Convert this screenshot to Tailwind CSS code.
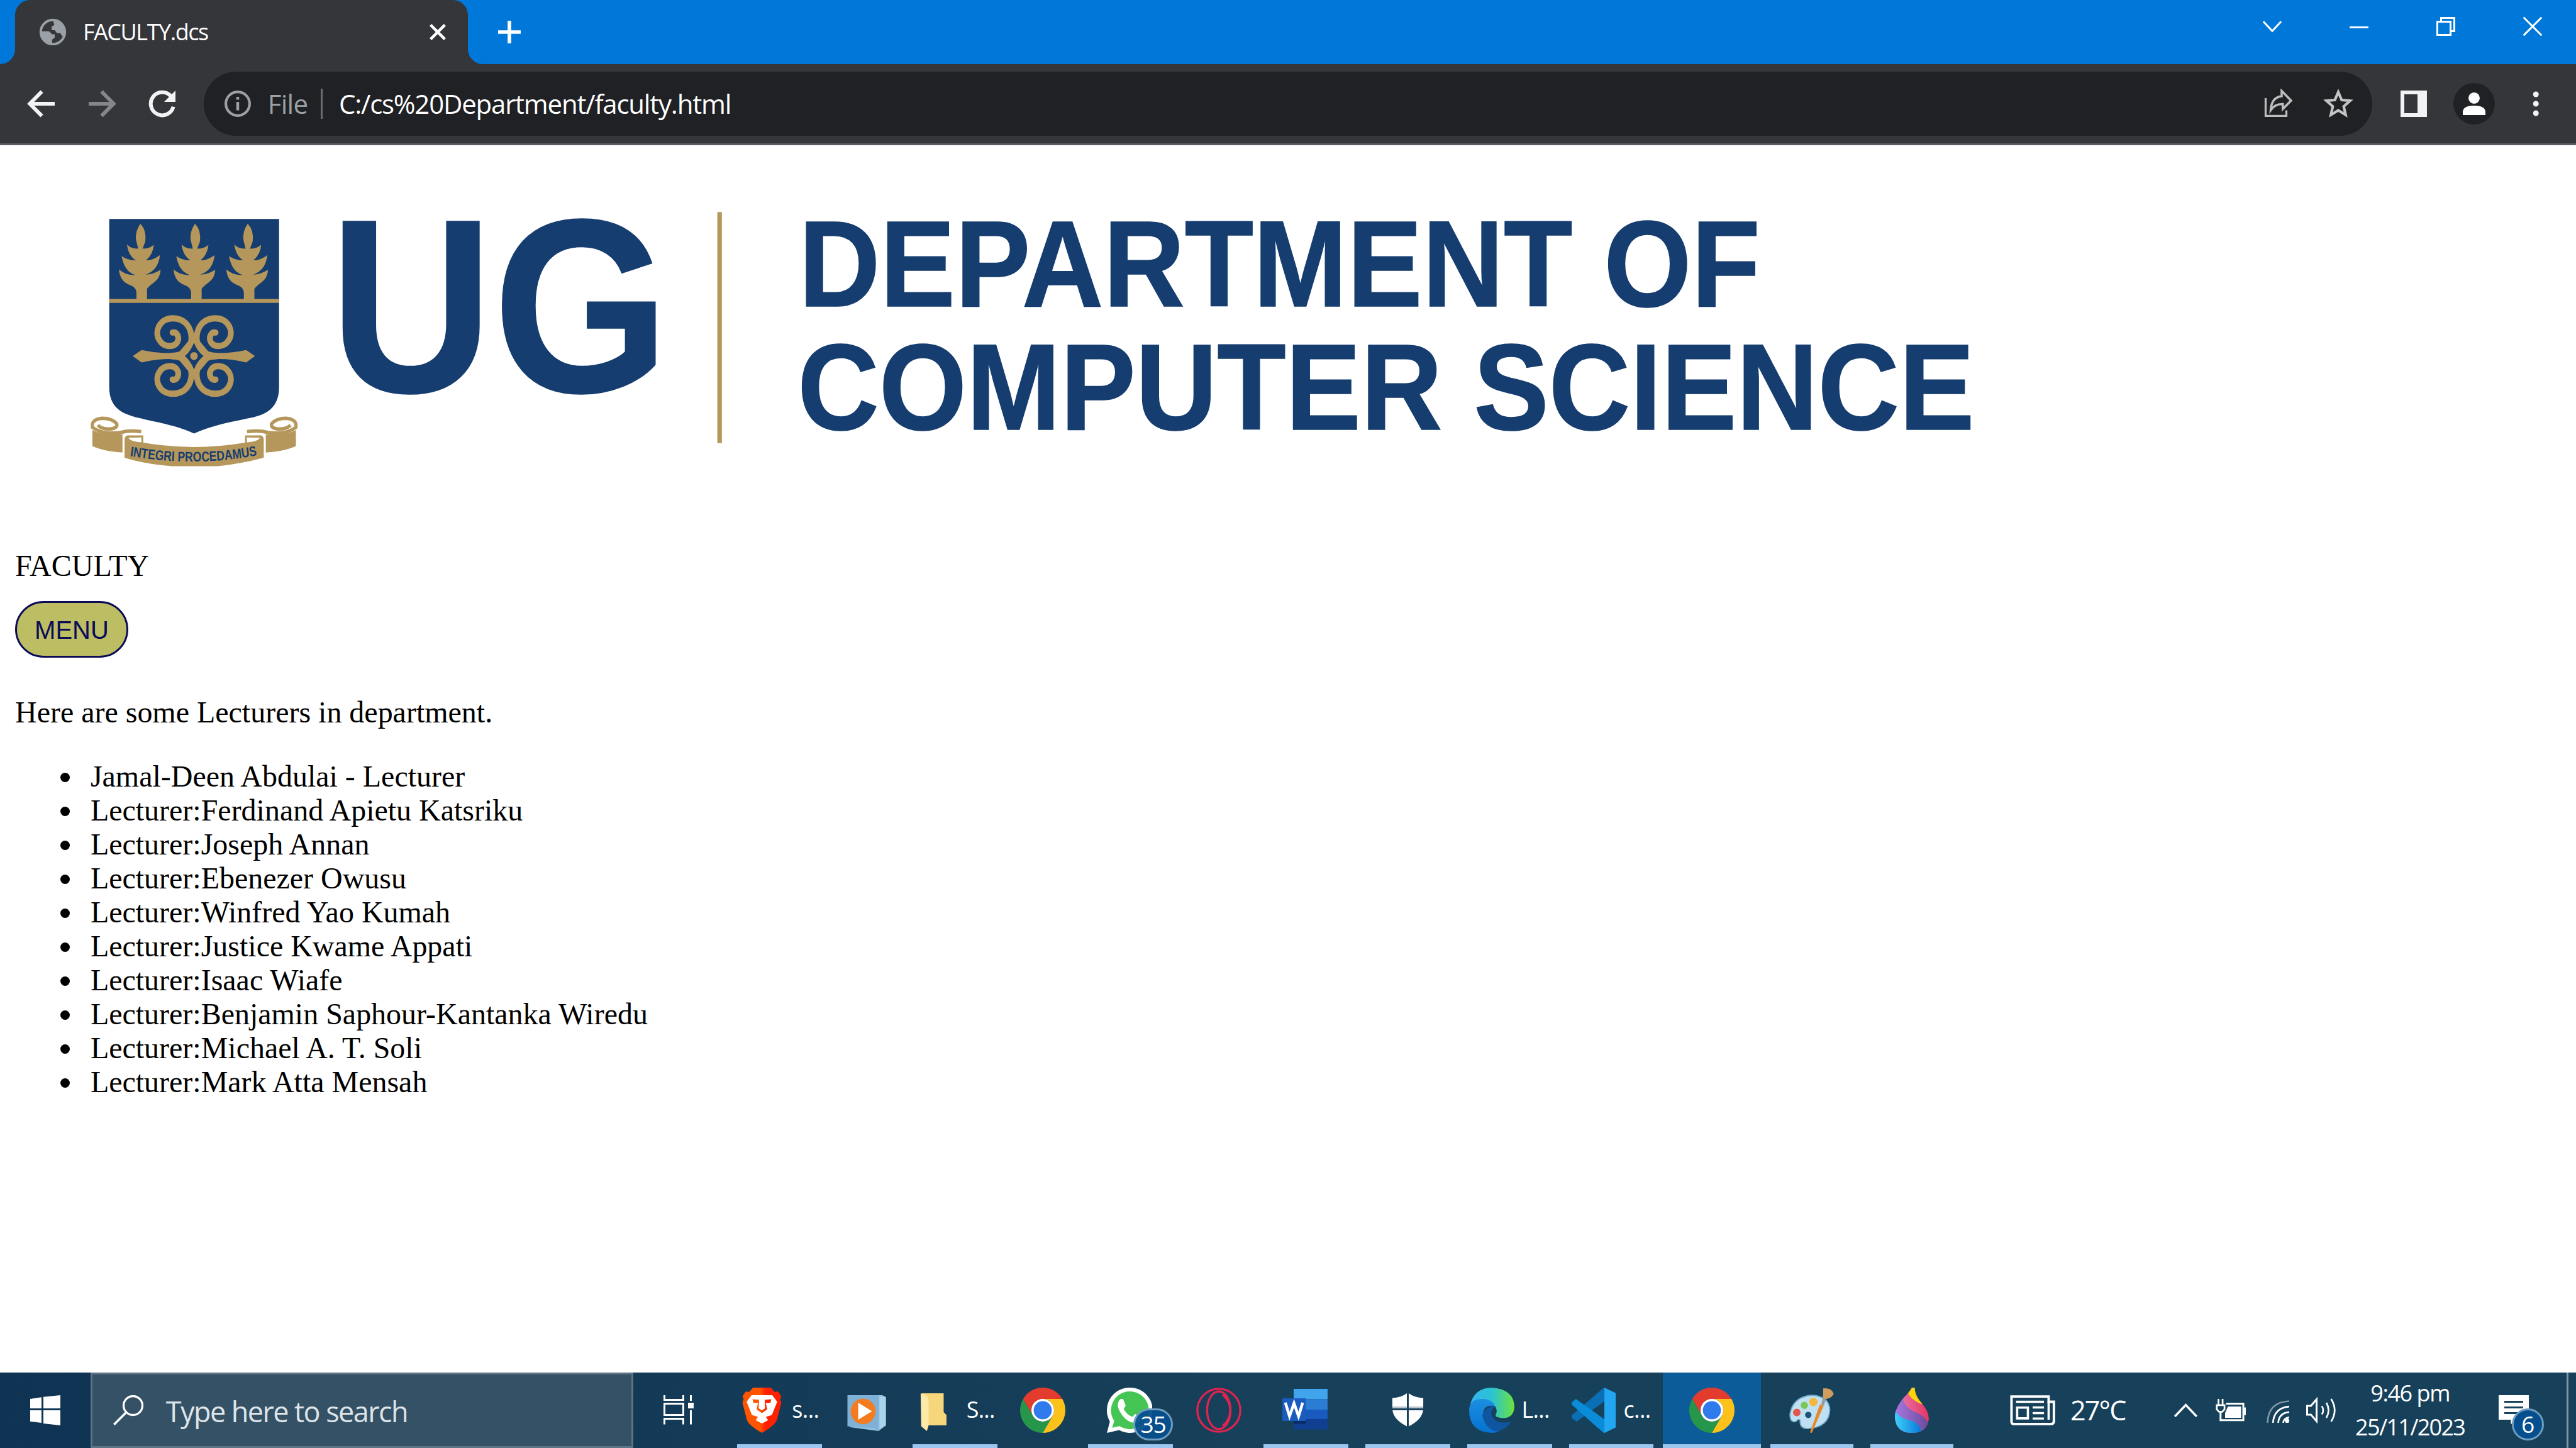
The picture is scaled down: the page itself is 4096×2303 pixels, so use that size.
<!DOCTYPE html>
<html lang="en" class="text-[11.994px]">
<head>
<meta charset="utf-8">
<title>FACULTY.dcs</title>
<script src="https://cdn.jsdelivr.net/npm/@tailwindcss/browser@4"></script>
</head>
<body class="h-[2303px] w-[4096px] overflow-hidden bg-white">
<svg width="0" height="0" class="absolute">
  <defs>
    <symbol id="chrome" viewBox="0 0 24 24">
      <path fill="#e33b2e" d="M1.6 6A12 12 0 0 1 22.4 6H12A6 6 0 0 0 6.8 15Z"/>
      <path fill="#fcc21b" d="M22.4 6A12 12 0 0 1 12 24L17.2 15A6 6 0 0 0 12 6Z"/>
      <path fill="#25964a" d="M12 24A12 12 0 0 1 1.6 6L6.8 15A6 6 0 0 0 17.2 15Z"/>
      <circle cx="12" cy="12" r="6" fill="#fff"/><circle cx="12" cy="12" r="4.8" fill="#2f7bee"/>
    </symbol>
    <g id="tree"><path d="M375 163Q344 205 349 250L362 300Q320 302 296 277Q305 340 348 364Q300 364 265 340Q280 425 345 444Q290 448 249 414Q255 480 310 498Q350 510 352 540V585H414V520Q425 505 455 485Q492 460 494 415Q450 442 405 442Q480 420 490 335Q450 364 408 364Q450 330 454 278Q430 300 388 300L404 260Q412 200 375 163Z"/></g>
    <path id="horn" d="M564 760C592 752 606 790 592 812C575 842 515 842 490 806C452 760 485 682 565 682C640 682 675 735 675 790C675 845 635 888 560 888" fill="none" stroke-width="34" stroke-linecap="round"/>
    <g id="scroll">
      <path d="M93 1295Q150 1325 270 1318V1418Q150 1410 93 1383Z"/>
      <path d="M125 1268Q150 1292 200 1289Q245 1283 236 1260Q210 1230 150 1230Q85 1236 93 1280Q150 1322 260 1308Q310 1294 380 1304" fill="none" stroke="#b5975b" stroke-width="19"/>
    </g>
    <path id="motto" d="M313 1437Q690 1501 1072 1432"/>
  </defs>
</svg>
<div class="flex h-full w-full flex-col font-['Open_Sans',sans-serif]">

  <!-- Tab strip -->
  <header class="flex h-34 shrink-0 bg-[#0078d9] text-white">
    <div class="relative ml-8 flex h-34 w-240 items-center rounded-t-[2rem] bg-[#35363a]">
      <svg class="absolute bottom-0 -left-8 size-8" viewBox="0 0 8 8"><path d="M8 0V8H0A8 8 0 0 0 8 0Z" fill="#35363a"/></svg>
      <svg class="absolute -right-8 bottom-0 size-8" viewBox="0 0 8 8"><path d="M0 0V8H8A8 8 0 0 1 0 0Z" fill="#35363a"/></svg>
      <svg class="ml-12 size-16" viewBox="0 0 16 16"><circle cx="8" cy="8" r="6.4" fill="none" stroke="#9aa0a6" stroke-width="1.3"/><path fill="#9aa0a6" d="M8.2 2H9.5A6.3 6.3 0 0 1 14.3 9L13 10.3 12 8.6H10.2L9 7H7.4V5.2L8.8 4.2ZM1.7 7.6H6L7.6 9.2H9V11L7.6 12V14.3A6.3 6.3 0 0 1 1.7 7.6Z"/></svg>
      <span class="ml-8 w-183 text-[3rem] leading-16 tracking-[-0.12rem] whitespace-nowrap">FACULTY.dcs</span>
      <svg class="size-10" viewBox="0 0 10 10"><path d="M1.2 1.2 8.8 8.8M8.8 1.2 1.2 8.8" stroke="#fff" stroke-width="1.5"/></svg>
    </div>
    <svg class="mt-11 ml-16 size-12" viewBox="0 0 12 12"><path d="M6 0V12M0 6H12" stroke="#fff" stroke-width="1.9"/></svg>
    <div class="mt-9 mr-18 ml-auto flex items-start">
      <svg class="mr-36 size-10" viewBox="0 0 10 10"><path d="M.3 2.4 5 7.4 9.7 2.4" fill="none" stroke="#fff"/></svg>
      <svg class="mr-36 size-10" viewBox="0 0 10 10"><path d="M0 5.5H10" stroke="#fff"/></svg>
      <svg class="mr-36 size-10" viewBox="0 0 10 10"><path d="M.5 2.5H7.5V9.5H.5ZM2.5 2.5V.5H9.5V7.5H7.5" fill="none" stroke="#fff"/></svg>
      <svg class="size-10" viewBox="0 0 10 10"><path d="M.2.2 9.8 9.8M9.8.2.2 9.8" stroke="#fff"/></svg>
    </div>
  </header>

  <!-- Toolbar -->
  <div class="flex h-43 shrink-0 items-start border-b-[3px] border-[#5f5e66] bg-[#35363a]">
    <svg class="mt-13 ml-14 size-16" viewBox="0 0 16 16"><path d="M15 8H2M8.2 1.5 1.8 8 8.2 14.5" fill="none" stroke="#f1f3f4" stroke-width="2"/></svg>
    <svg class="mt-13 ml-16 size-16" viewBox="0 0 16 16"><path d="M1 8H14M7.8 1.5 14.2 8 7.8 14.5" fill="none" stroke="#85868a" stroke-width="2"/></svg>
    <svg class="mt-13 ml-16 size-16" viewBox="0 0 16 16"><path d="M13.9 9.6A6.1 6.1 0 1 1 12.6 4" fill="none" stroke="#f1f3f4" stroke-width="2"/><path d="M15 1V7H9Z" fill="#f1f3f4"/></svg>
    <div class="mt-4 mr-15 ml-14 flex h-34 flex-1 items-center rounded-full bg-[#202124]">
      <svg class="ml-10 size-16" viewBox="0 0 16 16"><circle cx="8" cy="8" r="6.3" fill="none" stroke="#9aa0a6" stroke-width="1.4"/><path d="M8 7V11.5M8 4.3V5.8" stroke="#9aa0a6" stroke-width="1.5"/></svg>
      <span class="ml-8 w-28 text-[3.5rem] leading-18 tracking-[-0.06rem] whitespace-nowrap text-[#9aa0a6]">File</span>
      <span class="h-16 w-1 bg-[#6b6d71]"></span>
      <span class="ml-8.75 text-[3.5rem] leading-18 tracking-[-0.1rem] whitespace-nowrap text-white">C:/cs%20Department/faculty.html</span>
      <svg class="mr-16 ml-auto size-16" viewBox="0 0 16 16"><path d="M1.5 5V14.5H12.5V11.5" fill="none" stroke="#bdbdbd" stroke-width="1.1"/><path d="M10 1.2 15 6.3 10.6 10.8V8.2Q6.5 8 4.2 11.4 4.6 4.6 10 4Z" fill="none" stroke="#bdbdbd" stroke-width="1.2"/></svg>
      <svg class="mr-10 size-16" viewBox="0 0 16 16"><path d="M8 1.8 9.8 6 14.3 6.4 10.9 9.4 11.9 13.9 8 11.5 4.1 13.9 5.1 9.4 1.7 6.4 6.2 6Z" fill="none" stroke="#c4c4c4" stroke-width="1.4"/></svg>
    </div>
    <svg class="mt-14 size-14" viewBox="0 0 14 14"><path fill="#f1f3f4" fill-rule="evenodd" d="M0 0H14V14H0ZM2 2V12H9V2Z"/></svg>
    <svg class="mt-10 ml-14 size-22" viewBox="0 0 22 22"><circle cx="11" cy="11" r="11" fill="#202124"/><circle cx="11" cy="8" r="3" fill="#fff"/><path d="M5 17V15Q5.5 12 11 12T17 15V17Z" fill="#fff"/></svg>
    <svg class="mt-14 mr-19.5 ml-20 h-14 w-3.5" viewBox="0 0 3.5 14"><g fill="#f1f3f4"><circle cx="1.75" cy="2" r="1.5"/><circle cx="1.75" cy="7" r="1.5"/><circle cx="1.75" cy="12" r="1.5"/></g></svg>
  </div>

  <!-- Page -->
  <main class="flex flex-1 flex-col items-start overflow-hidden bg-white font-['Liberation_Serif',serif] text-[4rem] leading-18 text-black">
    <svg class="block h-[53.5rem] w-full shrink-0" viewBox="0 77 1366 214" preserveAspectRatio="none">
      <g transform="translate(40.6 102.87) scale(.09024 .09668)" fill="#b5975b">
        <path fill="#163d6f" d="M192 137H1190V1060C1190 1195 1085 1220 980 1236C860 1258 770 1280 690 1314C610 1278 520 1260 400 1236C300 1215 192 1195 192 1060Z"/>
        <use href="#tree"/><use href="#tree" x="321"/><use href="#tree" x="631"/>
        <path d="M192 576H1190V597H192Z"/>
        <g stroke="#b5975b">
          <use href="#horn"/>
          <use href="#horn" transform="translate(1381 0) scale(-1 1)"/>
          <use href="#horn" transform="translate(0 1778) scale(1 -1)"/>
          <use href="#horn" transform="translate(1381 1778) scale(-1 -1)"/>
        </g>
        <path d="M330 889 382 856Q480 875 560 872L600 870 690 770 780 870 820 872Q900 875 997 856L1048 889 997 924Q900 903 820 906L780 908 690 1010 600 908 560 906Q480 903 382 924Z"/>
        <path fill="#163d6f" d="M637 889Q670 865 690 816Q710 865 746 889Q710 915 690 962Q670 915 637 889Z"/>
        <circle cx="690" cy="889" r="22"/>
        <use href="#scroll"/><use href="#scroll" transform="translate(1382 0) scale(-1 1)"/>
        <path fill-rule="evenodd" d="M282 1345Q285 1322 310 1324H392V1364Q690 1412 990 1364V1324H1072Q1097 1322 1100 1345V1447Q960 1482 830 1493H560Q400 1482 282 1447ZM303 1337Q320 1360 381 1362V1336ZM1079 1337Q1062 1360 1001 1362V1336Z"/>
        <text fill="#163d6f" font-family="Liberation Sans" font-weight="700" font-size="76" textLength="752" lengthAdjust="spacingAndGlyphs"><textPath href="#motto" textLength="752" lengthAdjust="spacingAndGlyphs">INTEGRI PROCEDAMUS</textPath></text>
      </g>
      <path d="M380.4 112.4H382.8V235H380.4Z" fill="#b5975b"/>
      <g fill="#163d6f" stroke="#163d6f" stroke-width=".5" font-family="Liberation Sans" font-weight="700">
        <text x="174.7" y="207.8" font-size="131.5" textLength="180.2" lengthAdjust="spacingAndGlyphs">UG</text>
        <text x="423.6" y="162.4" font-size="65.1" textLength="509.8" lengthAdjust="spacingAndGlyphs">DEPARTMENT OF</text>
        <text x="423" y="227.8" font-size="65.1" textLength="624" lengthAdjust="spacingAndGlyphs">COMPUTER SCIENCE</text>
      </g>
    </svg>
    <p class="ml-8 whitespace-nowrap">FACULTY</p>
    <button class="mt-10 ml-8 flex h-30 w-60 items-center justify-center rounded-full border-[3px] border-[#0b0b58] bg-[#bdbd63] pt-1 font-['Liberation_Sans',sans-serif] text-[3.333rem] leading-16 text-[#0b0b58]">MENU</button>
    <p class="mt-20 ml-8 whitespace-nowrap">Here are some Lecturers in department.</p>
    <ul class="mt-16 ml-48 whitespace-nowrap">
      <li class="flex items-center"><span class="mt-1 mr-11 -ml-16 size-5 rounded-full bg-black"></span>Jamal-Deen Abdulai - Lecturer</li>
      <li class="flex items-center"><span class="mt-1 mr-11 -ml-16 size-5 rounded-full bg-black"></span>Lecturer:Ferdinand Apietu Katsriku</li>
      <li class="flex items-center"><span class="mt-1 mr-11 -ml-16 size-5 rounded-full bg-black"></span>Lecturer:Joseph Annan</li>
      <li class="flex items-center"><span class="mt-1 mr-11 -ml-16 size-5 rounded-full bg-black"></span>Lecturer:Ebenezer Owusu</li>
      <li class="flex items-center"><span class="mt-1 mr-11 -ml-16 size-5 rounded-full bg-black"></span>Lecturer:Winfred Yao Kumah</li>
      <li class="flex items-center"><span class="mt-1 mr-11 -ml-16 size-5 rounded-full bg-black"></span>Lecturer:Justice Kwame Appati</li>
      <li class="flex items-center"><span class="mt-1 mr-11 -ml-16 size-5 rounded-full bg-black"></span>Lecturer:Isaac Wiafe</li>
      <li class="flex items-center"><span class="mt-1 mr-11 -ml-16 size-5 rounded-full bg-black"></span>Lecturer:Benjamin Saphour-Kantanka Wiredu</li>
      <li class="flex items-center"><span class="mt-1 mr-11 -ml-16 size-5 rounded-full bg-black"></span>Lecturer:Michael A. T. Soli</li>
      <li class="flex items-center"><span class="mt-1 mr-11 -ml-16 size-5 rounded-full bg-black"></span>Lecturer:Mark Atta Mensah</li>
    </ul>
  </main>

  <!-- Taskbar -->
  <footer class="flex h-40 shrink-0 bg-linear-to-r from-[#0f3353] via-[#17405a] to-[#17415a] text-[3rem] leading-16 whitespace-nowrap text-white">
    <div class="flex w-48 items-center justify-center"><svg class="size-16" viewBox="0 0 16 16"><path fill="#fff" d="M0 2 6 1.1V7H0ZM7 .9 16 0V7H7ZM0 8H6V14.7L0 13.9ZM7 8H16V16L7 15Z"/></svg></div>
    <div class="flex w-288 items-center border-[3px] border-[#5d7386] bg-[#345166]">
      <svg class="ml-11 size-16" viewBox="0 0 16 16"><circle cx="10.5" cy="5.5" r="5" fill="none" stroke="#fff" stroke-width="1.1"/><path d="M7 9 .4 15.6" stroke="#fff" stroke-width="1.2"/></svg>
      <span class="mt-1 ml-12 text-[3.75rem] leading-20 tracking-[-0.13rem] text-[#dfe4e8]">Type here to search</span>
    </div>
    <div class="flex w-48 items-center justify-center"><svg class="size-16" viewBox="0 0 16 16"><g fill="none" stroke="#fff"><path d="M.5 0V2.5H10.5V0M.5 4.5H10.5V10.5H.5ZM.5 15.5V12.5H10.5V15.5M14.5 0V3M14.5 8V15.5"/></g><path d="M13 4H16V7H13Z" fill="#fff"/></svg></div>

    <div class="ml-7 flex w-45 items-center border-b-[6px] border-[#9ac6f0] pl-2.5">
      <svg class="mt-2 h-24 w-21" viewBox="0 0 21 24"><defs><linearGradient id="br"><stop offset=".45" stop-color="#ff5500"/><stop offset=".6" stop-color="#ff2000"/></linearGradient></defs><path fill="url(#br)" d="M5.8 0H15.2L17.3 2.3 19 2 20.8 4.6 20.2 6 20.8 8 18.5 17Q17.5 20 10.5 24 3.5 20 2.5 17L.2 8 .8 6 .2 4.6 2 2 3.7 2.3Z"/><path fill="#fff" fill-rule="evenodd" d="M5 4H16L18.6 7.5 15.8 14.5 12.6 15.5 13.8 17.3 10.5 19 7.2 17.3 8.4 15.5 5.2 14.5 2.4 7.5ZM5.5 6.2 9 6.4 8.8 11 10.5 12 12.2 11 12 6.4 15.5 6.2 15 8 12.6 8.2 13.3 11.5 10.5 13.5 7.7 11.5 8.4 8.2 6 8Z"/></svg>
      <span class="mt-1 ml-5.5 tracking-[-0.05rem]">s...</span>
    </div>
    <div class="ml-1 flex w-45 items-center justify-center">
      <svg class="mt-2 h-20 w-21" viewBox="0 0 21 20"><path fill="#8fbfe0" d="M2 1H19L21 2V17L17 20 2 18Z"/><path fill="#7fb0d6" d="M.5 1H17V20L15 18.5.5 17.5Z"/><path fill="#a9d4ea" d="M17.5 1.5 20.5 2V17L17.5 19Z"/><ellipse cx="8.8" cy="9.6" rx="6.6" ry="6.8" fill="#f47b20"/><path fill="#fff" d="M6.2 5 13.5 9.5 6.2 14Z"/></svg>
    </div>
    <div class="ml-2 flex w-45 items-center border-b-[6px] border-[#9ac6f0] pl-4">
      <svg class="mt-4 h-20 w-14" viewBox="0 0 14 20"><path fill="#f5d67a" d="M1 0H12.5V10L14 11.5V17H3Z"/><path fill="#ffe9a6" d="M.3 0 3 .8Q4.5 2 4.5 4V17L3.6 20 .6 17.5Z"/></svg>
      <span class="mt-1 ml-10.5 tracking-[-0.06rem]">S...</span>
    </div>
    <div class="ml-1.5 flex w-45 items-center justify-center"><svg class="size-24"><use href="#chrome"/></svg></div>
    <div class="relative ml-1.5 flex w-45 items-center border-b-[6px] border-[#9ac6f0] pl-10">
      <svg class="mt-2 size-24" viewBox="0 0 24 24"><path fill="#fff" d="M12 0A12 12 0 1 1 6.5 22.5L0 24 1.6 18A12 12 0 0 1 12 0Z"/><path fill="#45c654" d="M12 2A10 10 0 1 1 6.8 20.4L2.8 21.3 3.9 17.6A10 10 0 0 1 12 2Z"/><path fill="#fff" d="M7.2 6H8.6L10 9.5 8.9 11.3Q10.5 14.3 13.5 15.5L15 14 18.3 15.7Q18.3 18.7 15 18.8 11 18.5 8 14.5 4 9 7.2 6Z"/></svg>
      <span class="absolute top-19 left-24 flex h-17 w-21 items-center justify-center rounded-full border-[3px] border-[#6f9dc0] bg-[#064f8e]/95 text-[3.1rem] leading-17 tracking-[-0.1rem]">35</span>
    </div>
    <div class="ml-2 flex w-45 items-center justify-center"><svg class="size-24" viewBox="0 0 24 24"><g fill="none" stroke="#e0234f"><circle cx="12" cy="12" r="11.4" stroke-width="1.1"/><ellipse cx="12" cy="12" rx="6.2" ry="10" stroke-width="1.1"/><path d="M14 3.8Q18 7 18 12T14 20.2" stroke-width="1"/></g></svg></div>
    <div class="ml-1 flex w-45 items-center border-b-[6px] border-[#9ac6f0] pl-10">
      <svg class="mt-1 h-22 w-24" viewBox="0 0 24 22"><path fill="#41a5ee" d="M6 0H24V5.5H6Z"/><path fill="#2b7cd3" d="M6 5.5H24V11H6Z"/><path fill="#185abd" d="M6 11H24V16H6Z"/><path fill="#103f91" d="M6 16H24V21.5H6Z"/><path fill="#0a2c66" d="M6 17H12.5V18.5H6Z"/><path fill="#1a5bbe" d="M0 5H12.5V17H0Z"/><path d="M1.6 7.3 3.8 14.5 6.2 7.6 8.6 14.5 10.8 7.3" fill="none" stroke="#fff" stroke-width="1.5"/></svg>
    </div>
    <div class="ml-9 flex w-45 items-center justify-center border-b-[6px] border-[#9ac6f0]">
      <svg class="mt-1.5 h-17.5 w-17" viewBox="0 0 17 17.5"><path fill="#fff" d="M8 0V7H.3V2.5Q5 2.3 8 0ZM9 0Q12 2.3 16.7 2.5V7H9ZM.4 9H8V17.5Q1 14 .4 9ZM9 9H16.6Q16 14 9 17.5Z"/><path fill="#b4c3cc" d="M.3 7H8V8H.3ZM9 7H16.7V8H9Z"/></svg>
    </div>
    <div class="ml-9 flex w-45 items-center border-b-[6px] border-[#9ac6f0] pl-1">
      <svg class="mt-2 size-24" viewBox="0 0 24 24"><defs><linearGradient id="e1"><stop stop-color="#35b4ee"/><stop offset=".5" stop-color="#2bc3d2"/><stop offset="1" stop-color="#6be33a"/></linearGradient><linearGradient id="e2" x2="0" y2="1"><stop stop-color="#1b8fe0"/><stop offset="1" stop-color="#0672d0"/></linearGradient></defs><path fill="url(#e1)" d="M.5 9.5Q2.5 0 12.3 0 24 1 24 10.5 23.5 15.8 18.5 16.2 14 16 14 14.5 15.5 12 13.5 9.5 9 3 .5 9.5Z"/><path fill="url(#e2)" d="M0 12Q0 6.2 6.5 6 12.5 6 13.8 10 8.5 8.5 7.5 13 7 20.5 16 23.3 14 24 12 24 0 23.5 0 12Z"/><path fill="#0f559f" d="M12.5 9.6Q7.5 11.5 7 15 9 22.5 15 23.3 20.5 21.5 22.3 18Q13.5 20 11.8 14 11.5 11.5 13.6 10.5Z"/></svg>
      <span class="mt-1 ml-4 tracking-[-0.06rem]">L...</span>
    </div>
    <div class="ml-9 flex w-45 items-center border-b-[6px] border-[#9ac6f0] pl-1">
      <svg class="mt-2 size-24" viewBox="0 0 24 24"><path fill="#0a6fb4" d="M18 0V7L3 18 .4 16.2V14.8L17 .3Z"/><path fill="#0a8cd8" d="M.4 7.8 2.6 6 18 17V24L17 23.8.4 9Z"/><path fill="#23a6f2" d="M17.7 0 24 3V21L17.7 24Z"/></svg>
      <span class="mt-1 ml-4 tracking-[-0.05rem]">c...</span>
    </div>
    <div class="ml-5 flex w-52 items-center justify-center border-b-[6px] border-[#9ac6f0] bg-[#0c5c9a]"><svg class="mt-2 size-24"><use href="#chrome"/></svg></div>
    <div class="ml-5 flex w-44 items-center border-b-[6px] border-[#9ac6f0] pl-10">
      <svg class="mt-2 size-24" viewBox="0 0 24 24"><path fill="#bfe0f2" stroke="#6fa8c8" stroke-width=".6" d="M12.5 4Q21.5 5 21.5 12 21 21 10 21.7 5.5 22 5.8 17.5 5.3 16 3.5 18 .3 18.8.4 14 2 4.5 12.5 4Z"/><circle cx="10.1" cy="14.5" r="1.7" fill="#1d5377"/><circle cx="4" cy="13.2" r="2" fill="#e2574c"/><circle cx="8" cy="9.4" r="1.9" fill="#7cc653"/><circle cx="12.8" cy="7.6" r="2.2" fill="#f6b73c"/><path fill="#e58a2c" d="M16.2 9 18.3 9.6 12 24 11 23.8Z"/><path fill="#9a9a9a" d="M18 5 19.7 5.4 18.4 9.6 16.9 9Z"/><path fill="#d29c5e" d="M18 .4Q22.5 0 23.6 3.3 22 6 19 6L17.9 5Z"/></svg>
    </div>
    <div class="ml-9 flex w-44 items-center border-b-[6px] border-[#9ac6f0] pl-13">
      <svg class="mt-2 h-24 w-18" viewBox="0 0 18 24"><defs><clipPath id="drop"><path d="M10.5 0Q10.5 4 14 8 18 12.5 18 16.5 17 24 9 24 .5 24 0 15.5 0 11 5 5 8 2 9 0Z"/></clipPath><linearGradient id="dc"><stop stop-color="#3fd0fa"/><stop offset="1" stop-color="#0a78d8"/></linearGradient><linearGradient id="dp"><stop stop-color="#a778e0"/><stop offset="1" stop-color="#6a4a9c"/></linearGradient><linearGradient id="dr"><stop stop-color="#e87fb0"/><stop offset="1" stop-color="#e53565"/></linearGradient></defs><g clip-path="url(#drop)"><path fill="url(#dr)" d="M0 0H18V24H0Z"/><path fill="#fbd40a" d="M8 0H12L15 9Q9 7 7 3Z"/><path fill="url(#dp)" d="M4 5Q5 11 12 13.5 17 15.5 18 20V24H0V9Z"/><path fill="url(#dc)" d="M0 11.5Q1.5 16 8 17.3 14 19 14 24H0Z"/></g></svg>
    </div>

    <div class="ml-30 flex items-center text-[3.6rem]">
      <svg class="h-16 w-24" viewBox="0 0 24 16"><g fill="none" stroke="#fff"><path d="M.8.7H20.5V3.5H23.3V14Q23 15.3 22 15.3H2Q.8 15.3.8 14Z" stroke-width="1.3"/><path d="M20.5 3.5V13" stroke-width="1.2"/><path d="M3.2 3.5H18M12 6.5H18M12 9.5H18M12 12.4H18" stroke-width="1.1"/><path d="M3.8 6.6H9.5V12.3H3.8Z" stroke-width="1.2"/></g></svg>
      <span class="ml-8 tracking-[-0.16rem]">27°C</span>
    </div>
    <div class="ml-auto flex items-center">
      <svg class="mr-9.5 h-8 w-13" viewBox="0 0 13 8"><path d="M.7 7.3 6.5 1.2 12.3 7.3" fill="none" stroke="#fff" stroke-width="1.2"/></svg>
      <svg class="mr-11 h-12 w-16" viewBox="0 0 16 12"><path d="M5.5 2.5H14.7V11.3H2.6V7" fill="none" stroke="#fff"/><path fill="#fff" d="M15 4.5H16V8.5H15ZM6.5 4H13.5V10H5V7.5Z"/><path d="M1.5 0V3M3.7 0V3M.6 3.3H4.7V5.5L3.5 6.8H1.8L.6 5.5Z" fill="none" stroke="#fff" stroke-width=".9"/></svg>
      <svg class="mt-1.5 mr-9 h-12 w-12" viewBox="0 0 12 12"><g fill="none" stroke="#fff" stroke-width=".9"><path d="M.5 12Q.8 1 12 .5" opacity=".45"/><path d="M3.4 12Q4 4 12 3.4M6.2 12Q6.5 6.8 12 6.3M8.8 12Q9 9.5 12 9"/></g><circle cx="10.9" cy="10.9" r="1.2" fill="#fff"/></svg>
      <svg class="mr-10 h-14 w-16" viewBox="0 0 16 14"><g fill="none" stroke="#fff"><path d="M.5 4.7H2.5L5.5 1.2V12.8L2.5 9.3H.5Z"/><path d="M8.3 4.8Q9.7 7 8.3 9.2M10.7 3Q13 7 10.7 11M13.2 1Q17 7 13.2 13" stroke-width=".9"/></g></svg>
      <div class="mr-18 flex w-58 flex-col items-center leading-18"><span class="tracking-[-0.12rem]">9:46 pm</span><span class="tracking-[-0.14rem]">25/11/2023</span></div>
      <div class="relative mr-20 h-16 w-16">
        <svg class="size-16" viewBox="0 0 16 16"><path fill="#fff" fill-rule="evenodd" d="M0 0H16V13H9L6.5 15.5V13H0ZM3 3V4H13V3ZM3 6V7H13V6ZM3 9V10H10V9Z"/></svg>
        <span class="absolute top-7 left-7 flex size-17 items-center justify-center rounded-full border-[3px] border-[#6f9dc0] bg-[#064f8e] text-[3.1rem] leading-17">6</span>
      </div>
      <span class="h-40 w-1 bg-[#8197a5]"></span><span class="w-4"></span>
    </div>
  </footer>
</div>
</body>
</html>
